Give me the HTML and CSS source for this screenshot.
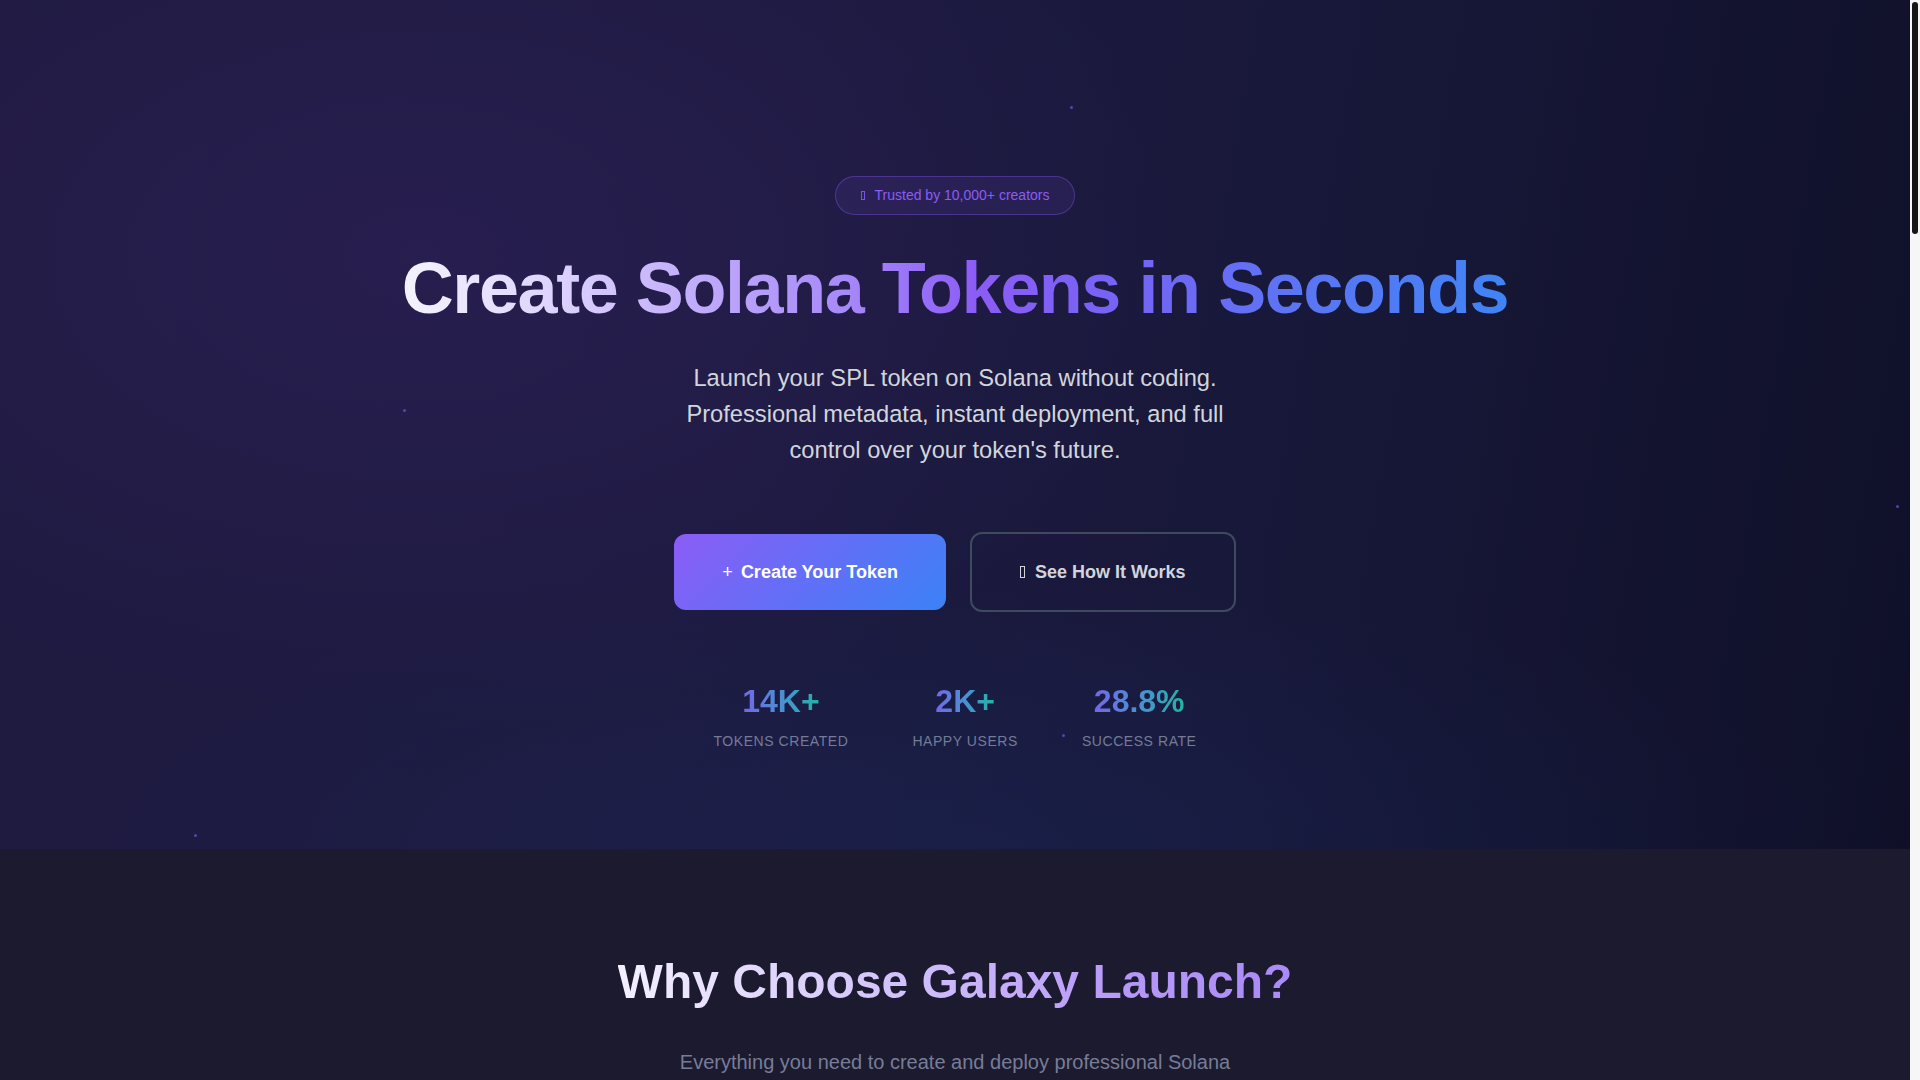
FILE: index.html
```html
<!DOCTYPE html>
<html lang="en">
<head>
<meta charset="utf-8">
<title>Galaxy Launch – Create Solana Tokens in Seconds</title>
<link rel="stylesheet" href="styles.css">
</head>
<body>
<div class="shell">
<main class="page">
  <section class="hero">
    <span class="star star-1"></span>
    <span class="star star-2"></span>
    <span class="star star-3"></span>
    <span class="star star-4"></span>
    <span class="star star-5"></span>

    <div class="badge"><span class="tofu tofu-sm"></span>Trusted by 10,000+ creators</div>

    <h1 class="hero-title"><span class="grad-text">Create Solana Tokens in Seconds</span></h1>

    <p class="hero-sub">Launch your SPL token on Solana without coding. Professional metadata, instant deployment, and full control over your token's future.</p>

    <div class="hero-actions">
      <a class="btn btn-primary" href="#create"><span class="plus">+</span>Create Your Token</a>
      <a class="btn btn-outline" href="#how"><span class="tofu tofu-md"></span>See How It Works</a>
    </div>

    <div class="stats">
      <div class="stat">
        <div class="stat-num"><span class="num-grad">14K+</span></div>
        <div class="stat-label">Tokens Created</div>
      </div>
      <div class="stat">
        <div class="stat-num"><span class="num-grad">2K+</span></div>
        <div class="stat-label">Happy Users</div>
      </div>
      <div class="stat">
        <div class="stat-num"><span class="num-grad">28.8%</span></div>
        <div class="stat-label">Success Rate</div>
      </div>
    </div>
  </section>

  <section class="features" id="how">
    <h2 class="section-title"><span class="grad-soft">Why Choose Galaxy Launch?</span></h2>
    <p class="section-sub">Everything you need to create and deploy professional Solana tokens, all in one place.</p>

    <div class="feature-grid">
      <div class="feature-card"><h3>Instant Deployment</h3><p>Your token goes live on Solana mainnet in seconds.</p></div>
      <div class="feature-card"><h3>Professional Metadata</h3><p>Name, symbol, logo and links stored on-chain.</p></div>
      <div class="feature-card"><h3>Full Control</h3><p>Keep or revoke mint and freeze authority.</p></div>
      <div class="feature-card"><h3>No Coding</h3><p>A simple form replaces command-line tools.</p></div>
      <div class="feature-card"><h3>Low Fees</h3><p>Pay only for what you use, nothing hidden.</p></div>
      <div class="feature-card"><h3>Secure</h3><p>Transactions are signed in your own wallet.</p></div>
    </div>
  </section>

  <section class="steps" id="create">
    <h2 class="section-title"><span class="grad-soft">How It Works</span></h2>
    <ol class="step-list">
      <li>Connect your wallet</li>
      <li>Fill in your token details</li>
      <li>Deploy and share</li>
    </ol>
  </section>

  <footer class="footer">© Galaxy Launch</footer>
</main>
<div class="rail" aria-hidden="true"><div class="rail-thumb"></div></div>
</div>
</body>
</html>
```

FILE: styles.css
```css
html, body {
  margin: 0;
  padding: 0;
  height: 100%;
  overflow: hidden;
}

body {
  background: #1b1a2e;
  font-family: "Liberation Sans", Arial, sans-serif;
  color: #e5e7eb;
}

.shell {
  display: flex;
  height: 100vh;
}

.page {
  flex: 1;
  min-width: 0;
  height: 100vh;
  overflow-y: auto;
  display: flex;
  flex-direction: column;
  scrollbar-width: none;
}
.page::-webkit-scrollbar {
  display: none;
}

.rail {
  width: 10px;
  flex-shrink: 0;
  background: #f6f6f6;
  display: flex;
  justify-content: center;
  padding-top: 2px;
  box-sizing: border-box;
}
.rail-thumb {
  width: 6px;
  height: 232px;
  border-radius: 3px;
  background: #161616;
}

/* ---------- hero ---------- */
.hero {
  position: relative;
  overflow: hidden;
  flex-shrink: 0;
  display: flex;
  flex-direction: column;
  align-items: center;
  padding: 176px 24px 98px;
  background:
    radial-gradient(ellipse 60% 40% at 50% 100%, rgba(24, 50, 105, 0.24), rgba(24, 50, 105, 0) 80%),
    radial-gradient(ellipse 55% 75% at 22% 30%, rgba(58, 38, 108, 0.34), rgba(58, 38, 108, 0) 75%),
    linear-gradient(100deg, #1f1a40 0%, #1d1a40 40%, #18183a 65%, #0f1028 100%);
}

.star {
  position: absolute;
  width: 3px;
  height: 3px;
  border-radius: 50%;
  background: rgba(110, 80, 220, 0.75);
}
.star-1 { left: 1070px; top: 106px; }
.star-2 { left: 403px; top: 409px; }
.star-3 { left: 1896px; top: 505px; }
.star-4 { left: 1062px; top: 734px; }
.star-5 { left: 194px; top: 834px; }

.badge {
  display: flex;
  align-items: center;
  padding: 9px 25px;
  line-height: 19px;
  font-size: 14px;
  color: #8b5cf6;
  background: rgba(139, 92, 246, 0.1);
  border: 1px solid rgba(139, 92, 246, 0.35);
  border-radius: 999px;
}

.tofu {
  display: inline-block;
  box-sizing: border-box;
  border: 1px solid currentColor;
}
.tofu-sm {
  width: 4px;
  height: 9px;
  margin-right: 10px;
  opacity: 0.85;
}
.tofu-md {
  width: 5px;
  height: 12px;
  margin-right: 10px;
}

.hero-title {
  margin: 37px 0 0;
  font-size: 72px;
  line-height: 1;
  font-weight: 700;
  letter-spacing: -0.02em;
  text-align: center;
}

.grad-text {
  display: inline-block;
  background: linear-gradient(90deg, #f5f3ff 0%, #ddd3fd 14%, #c2adfb 26%, #a789f9 40%, #8b5cf6 52%, #7464f5 66%, #5d74f4 80%, #3f84f6 100%);
  -webkit-background-clip: text;
  background-clip: text;
  color: transparent;
}

.hero-sub {
  margin: 36px 0 0;
  max-width: 576px;
  font-size: 23.7px;
  line-height: 36px;
  text-align: center;
  color: #d1d5db;
}

.hero-actions {
  margin-top: 64px;
  display: flex;
  align-items: center;
  gap: 24px;
}

.btn {
  display: inline-flex;
  align-items: center;
  padding: 24px 48px;
  font-size: 18px;
  line-height: 28px;
  font-weight: 700;
  border-radius: 12px;
  text-decoration: none;
}

.btn-primary {
  color: #ffffff;
  background: linear-gradient(135deg, #8b5cf6 0%, #3b82f6 100%);
}

.plus {
  font-weight: 400;
  margin-right: 8px;
}

.btn-outline {
  color: #d1d5db;
  border: 2px solid #3e4a5e;
  background: transparent;
}

.stats {
  margin-top: 69px;
  display: flex;
  gap: 64px;
}

.stat {
  display: flex;
  flex-direction: column;
  align-items: center;
}

.stat-num {
  font-size: 32px;
  line-height: 40px;
  font-weight: 700;
}

.num-grad {
  display: inline-block;
  background: linear-gradient(90deg, #7268e6 0%, #4c8fd2 50%, #22b5a2 100%);
  -webkit-background-clip: text;
  background-clip: text;
  color: transparent;
}

.stat-label {
  margin-top: 10px;
  font-size: 14px;
  line-height: 20px;
  letter-spacing: 0.04em;
  text-transform: uppercase;
  color: #737b96;
}

/* ---------- features ---------- */
.features {
  flex-shrink: 0;
  display: flex;
  flex-direction: column;
  align-items: center;
  padding: 104px 24px 120px;
  background: #1b1a2e;
}

.section-title {
  margin: 0;
  font-size: 48px;
  line-height: 1.2;
  font-weight: 700;
  text-align: center;
}

.grad-soft {
  display: inline-block;
  background: linear-gradient(90deg, #f4f0ff 0%, #d3c3fb 40%, #b798f8 75%, #a98af8 100%);
  -webkit-background-clip: text;
  background-clip: text;
  color: transparent;
}

.section-sub {
  margin: 37px 0 0;
  max-width: 576px;
  font-size: 20px;
  line-height: 28px;
  text-align: center;
  color: #777d98;
}

.feature-grid {
  margin-top: 80px;
  width: 1200px;
  display: grid;
  grid-template-columns: repeat(3, 1fr);
  gap: 32px;
}

.feature-card {
  min-height: 320px;
  padding: 32px;
  border-radius: 16px;
  background: #222138;
  border: 1px solid #2e2d48;
}

.feature-card h3 {
  margin: 0 0 12px;
  font-size: 22px;
  color: #e5e7eb;
}

.feature-card p {
  margin: 0;
  font-size: 16px;
  line-height: 24px;
  color: #8a90a8;
}

/* ---------- steps ---------- */
.steps {
  flex-shrink: 0;
  display: flex;
  flex-direction: column;
  align-items: center;
  min-height: 2570px;
  padding: 120px 24px;
  background: #17162a;
}

.step-list {
  margin: 48px 0 0;
  padding: 0;
  list-style: none;
  display: flex;
  flex-direction: column;
  gap: 24px;
  font-size: 20px;
  color: #c7cad8;
}

.footer {
  flex-shrink: 0;
  padding: 48px 24px;
  text-align: center;
  font-size: 14px;
  color: #6b7280;
  background: #121122;
}
```
